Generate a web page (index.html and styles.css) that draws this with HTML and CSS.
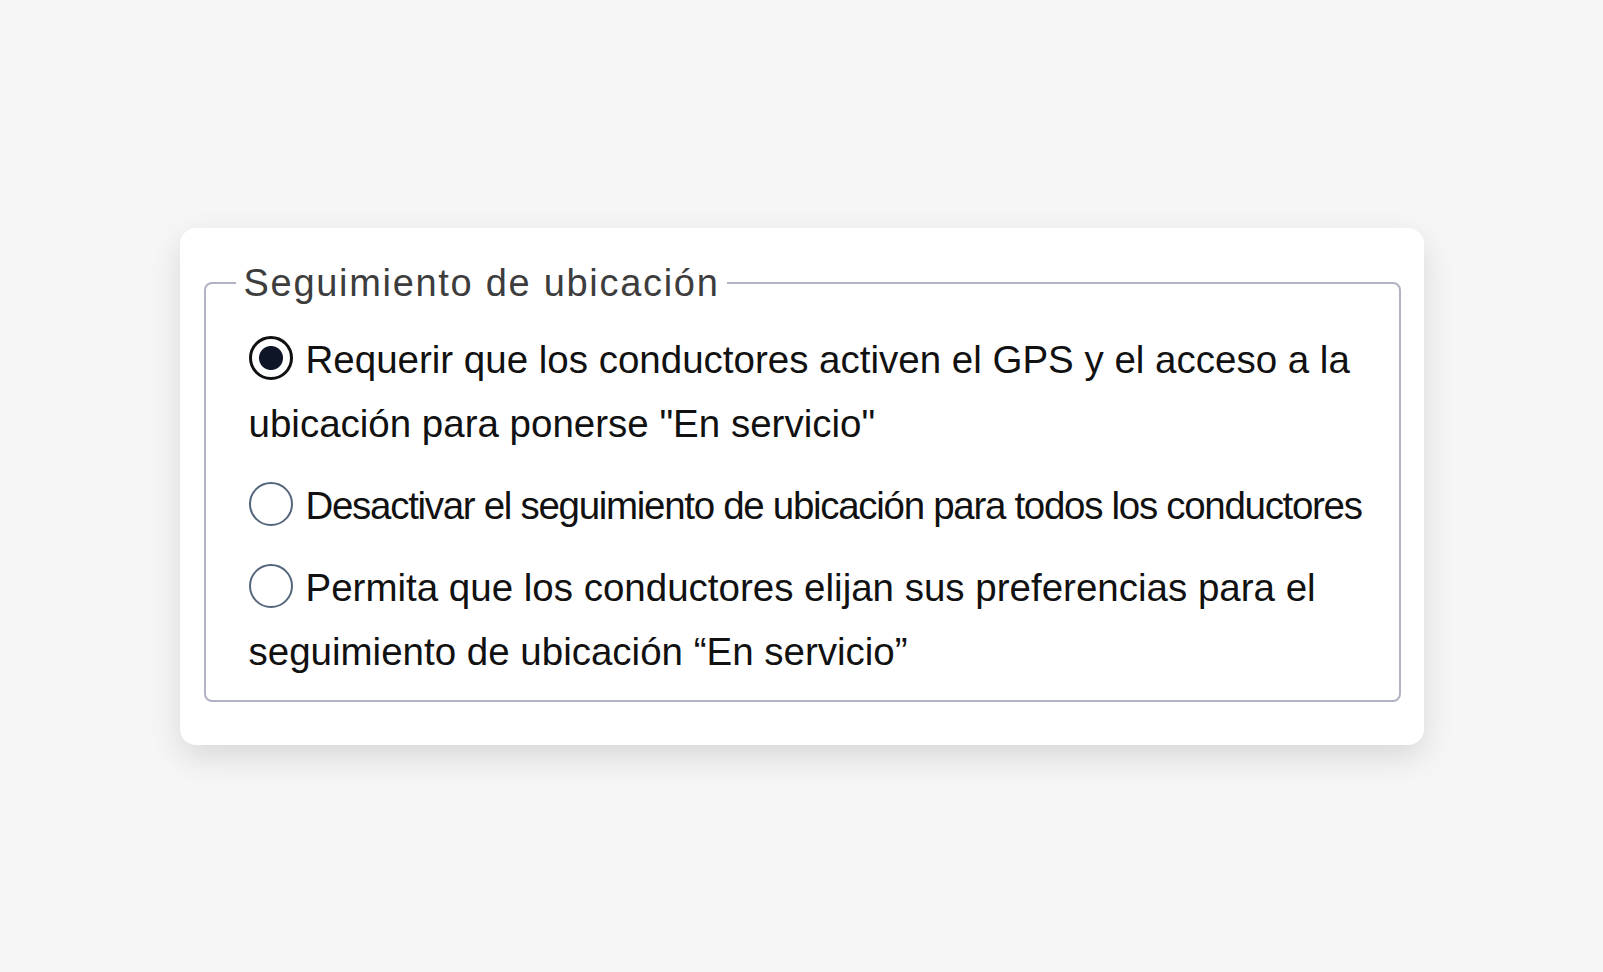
FILE: index.html
```html
<!DOCTYPE html>
<html lang="es">

<head>
  <meta charset="UTF-8">
  <meta name="viewport" content="width=device-width, initial-scale=1.0">
  <title>Seguimiento de ubicación</title>
  <link rel="stylesheet" href="styles.css">
</head>

<body>

  <section class="tarjeta">
    <fieldset class="grupo">
      <legend>Seguimiento de ubicación</legend>

      <label class="opcion">
        <input type="radio" name="ubicacion" class="radio" checked>Requerir que los conductores activen el GPS y el acceso a la ubicación para ponerse "En servicio"
      </label>

      <label class="opcion opcion-corta">
        <input type="radio" name="ubicacion" class="radio">Desactivar el seguimiento de ubicación para todos los conductores
      </label>

      <label class="opcion">
        <input type="radio" name="ubicacion" class="radio">Permita que los conductores elijan sus preferencias para el seguimiento de ubicación “En servicio”
      </label>
    </fieldset>
  </section>

</body>

</html>
```

FILE: styles.css
```css
body {
  background-color: #f6f6f6;
  display: flex;
  justify-content: center;
  align-items: center;
  height: 100vh;
  margin: 0;
  font-family: "Liberation Sans", Arial, sans-serif;
}

.tarjeta {
  box-sizing: border-box;
  width: 1244px;
  padding: 33px 23px 43px 24px;
  background-color: #fff;
  border-radius: 16px;
  box-shadow: 0 12px 32px rgba(0, 0, 0, 0.12);
}

.grupo {
  margin: 0;
  padding: 23px 12px 16px 43px;
  border: 2px solid #b0b2c6;
  border-radius: 8px;
}

.grupo legend {
  margin-left: -13px;
  padding: 0 8px;
  font-size: 38px;
  line-height: 44px;
  letter-spacing: 1.7px;
  color: #3d3d3d;
}

.opcion {
  display: block;
  margin-bottom: 18px;
  font-size: 38.5px;
  line-height: 64px;
  color: #111;
  cursor: pointer;
}

.opcion:last-child {
  margin-bottom: 0;
}

/* una sola línea: se aprieta un poco para que quepa */
.opcion-corta {
  letter-spacing: -1.3px;
}

.radio {
  appearance: none;
  box-sizing: border-box;
  width: 44px;
  height: 44px;
  margin: 0 13px 0 0;
  vertical-align: -7px;
  border: 2.5px solid #54667b;
  border-radius: 50%;
  background: #fff;
  cursor: pointer;
}

.radio:checked {
  border: 3px solid #111;
  background: radial-gradient(circle, #0d1526 0 11.5px, #fff 12.5px);
}
```
